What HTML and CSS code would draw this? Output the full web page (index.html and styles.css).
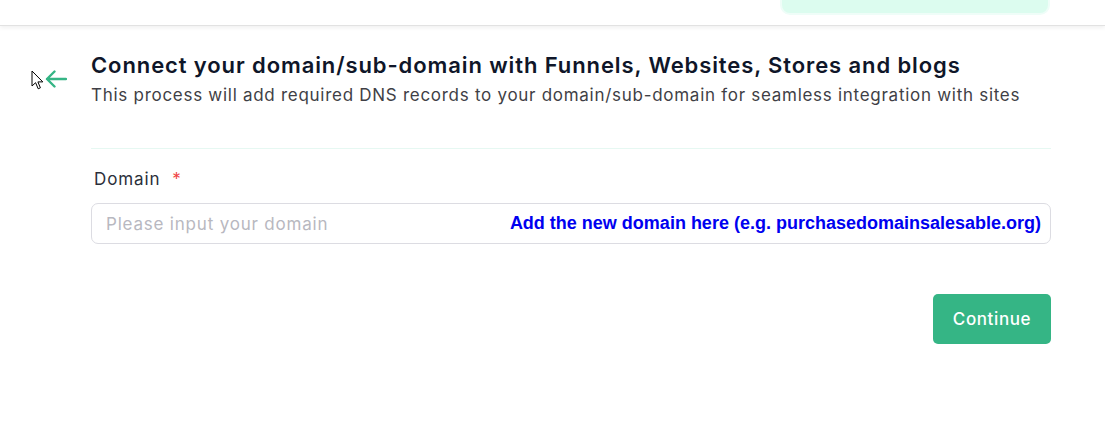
FILE: index.html
```html
<!DOCTYPE html>
<html>
<head>
<meta charset="utf-8">
<link rel="stylesheet" href="styles.css">
</head>
<body>
<header class="topbar">
  <div class="pill"></div>
</header>
<main class="page">
  <div class="back">
    <svg class="cursor" width="13" height="20" viewBox="0 0 13 20"><path d="M1 1 L1 16 L4.6 12.7 L7.2 18.8 L9.4 17.8 L6.9 11.9 L11.8 11.9 Z" fill="#fff" stroke="#000" stroke-width="1" stroke-linejoin="miter"/></svg>
    <svg class="arrow" width="22" height="18" viewBox="0 0 22 18"><path d="M21 9 H2 M9.5 1.5 L2 9 L9.5 16.5" fill="none" stroke="#35b585" stroke-width="2.4" stroke-linecap="round" stroke-linejoin="round"/></svg>
  </div>
  <section class="content">
    <h1 class="title">Connect your domain/sub-domain with Funnels, Websites, Stores and blogs</h1>
    <p class="subtitle">This process will add required DNS records to your domain/sub-domain for seamless integration with sites</p>
    <div class="divider"></div>
    <label class="label">Domain <span class="req">*</span></label>
    <div class="field">
      <input class="input" type="text" placeholder="Please input your domain">
      <span class="hint">Add the new domain here (e.g. purchasedomainsalesable.org)</span>
    </div>
    <div class="actions">
      <button class="btn">Continue</button>
    </div>
  </section>
</main>
</body>
</html>
```

FILE: styles.css
```css
html, body {
  margin: 0;
  padding: 0;
  background: #fff;
  font-family: "Inter", "Open Sans", sans-serif;
  overflow: hidden;
}
.topbar {
  height: 25px;
  border-bottom: 1px solid #e2e2e2;
  box-shadow: 0 2px 4px rgba(0,0,0,0.06);
  display: flex;
  justify-content: flex-end;
  align-items: flex-start;
  padding-right: 55px;
  overflow: hidden;
}
.pill {
  width: 266px;
  height: 20px;
  margin-top: -9px;
  background: #dcfcef;
  border: 2px solid #effdf8;
  border-radius: 10px;
}
.page {
  display: flex;
  padding-top: 24px;
}
.back {
  width: 91px;
  display: flex;
  align-items: flex-start;
  padding-top: 20px;
  padding-left: 31px;
  box-sizing: border-box;
}
.cursor { display: block; }
.arrow { display: block; margin-left: 1px; }
.content {
  width: 960px;
}
.title {
  margin: 0;
  font-size: 22px;
  font-weight: 600;
  color: #0f1629;
  line-height: 30px;
  letter-spacing: 0.9px;
}
.subtitle {
  margin: 0;
  font-size: 17px;
  color: #3f3f46;
  line-height: 30px;
  letter-spacing: 0.72px;
}
.divider {
  height: 1px;
  background: #e6f8f2;
  margin-top: 38px;
}
.label {
  display: block;
  margin-top: 19px;
  padding-left: 3px;
  font-size: 17px;
  color: #2b2f3a;
  line-height: 22px;
  letter-spacing: 0.9px;
}
.req { color: #ef4444; margin-left: 6px; }
.field {
  position: relative;
  margin-top: 13px;
}
.input {
  display: block;
  width: 100%;
  box-sizing: border-box;
  height: 41px;
  border: 1px solid #dcdce2;
  border-radius: 7px;
  padding: 0 14px;
  font-family: inherit;
  font-size: 17px;
  letter-spacing: 0.8px;
  outline: none;
}
.input::placeholder { color: #b8b8c0; }
.hint {
  position: absolute;
  right: 10px;
  top: 8px;
  font-family: "Liberation Sans", Arial, sans-serif;
  font-weight: 700;
  font-size: 18px;
  color: #0000f0;
  line-height: 24px;
}
.actions {
  display: flex;
  justify-content: flex-end;
  margin-top: 50px;
}
.btn {
  width: 118px;
  height: 50px;
  background: #35b585;
  color: #fff;
  border: none;
  border-radius: 5px;
  font-family: inherit;
  font-size: 17px;
  font-weight: 500;
  letter-spacing: 0.6px;
}
```
